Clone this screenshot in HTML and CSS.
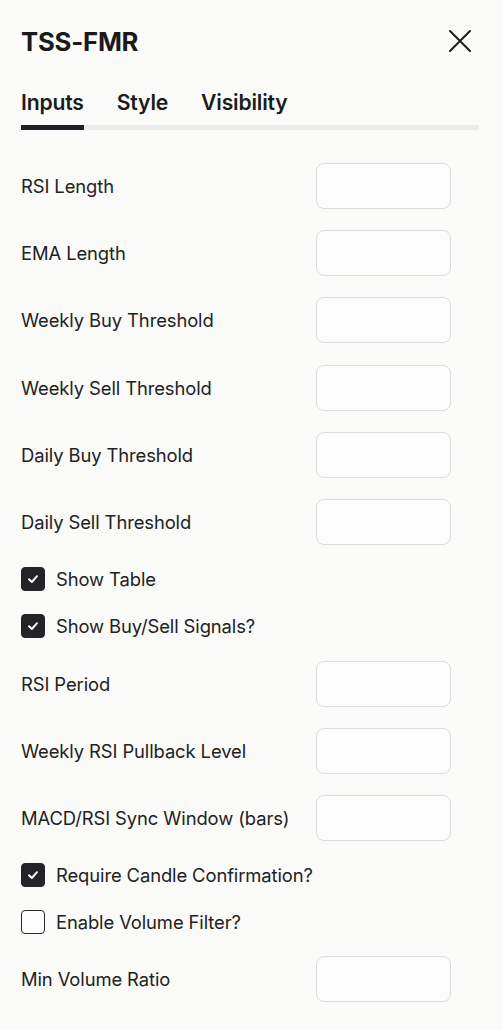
FILE: index.html
```html
<!DOCTYPE html>
<html>
<head>
<meta charset="utf-8">
<link rel="stylesheet" href="styles.css">
</head>
<body>
<div class="panel">
  <header class="header">
    <h1 class="title">TSS-FMR</h1>
    <button class="close" aria-label="Close">
      <svg width="22" height="22" viewBox="0 0 22 22"><path d="M1 1 L21 21 M21 1 L1 21" stroke="#1c1c1c" stroke-width="2" stroke-linecap="round"/></svg>
    </button>
  </header>
  <nav class="tabs">
    <span class="tab active">Inputs</span>
    <span class="tab">Style</span>
    <span class="tab">Visibility</span>
  </nav>
  <div class="form">
    <div class="row"><span class="label">RSI Length</span><input class="field" type="text"></div>
    <div class="row"><span class="label">EMA Length</span><input class="field" type="text"></div>
    <div class="row"><span class="label">Weekly Buy Threshold</span><input class="field" type="text"></div>
    <div class="row"><span class="label">Weekly Sell Threshold</span><input class="field" type="text"></div>
    <div class="row"><span class="label">Daily Buy Threshold</span><input class="field" type="text"></div>
    <div class="row"><span class="label">Daily Sell Threshold</span><input class="field" type="text"></div>
    <label class="check"><span class="box on"><svg width="14" height="14" viewBox="0 0 14 14"><path d="M3 7.3 L5.9 10 L11 4.2" fill="none" stroke="#fff" stroke-width="2" stroke-linecap="round" stroke-linejoin="round"/></svg></span><span class="label">Show Table</span></label>
    <label class="check"><span class="box on"><svg width="14" height="14" viewBox="0 0 14 14"><path d="M3 7.3 L5.9 10 L11 4.2" fill="none" stroke="#fff" stroke-width="2" stroke-linecap="round" stroke-linejoin="round"/></svg></span><span class="label">Show Buy/Sell Signals?</span></label>
    <div class="row"><span class="label">RSI Period</span><input class="field" type="text"></div>
    <div class="row"><span class="label">Weekly RSI Pullback Level</span><input class="field" type="text"></div>
    <div class="row"><span class="label">MACD/RSI Sync Window (bars)</span><input class="field" type="text"></div>
    <label class="check"><span class="box on"><svg width="14" height="14" viewBox="0 0 14 14"><path d="M3 7.3 L5.9 10 L11 4.2" fill="none" stroke="#fff" stroke-width="2" stroke-linecap="round" stroke-linejoin="round"/></svg></span><span class="label">Require Candle Confirmation?</span></label>
    <label class="check"><span class="box"></span><span class="label">Enable Volume Filter?</span></label>
    <div class="row"><span class="label">Min Volume Ratio</span><input class="field" type="text"></div>
  </div>
</div>
</body>
</html>
```
FILE: styles.css
```css
html, body {
  margin: 0;
  padding: 0;
  background: #fafaf9;
}
body {
  font-family: Inter, "Noto Sans", "Liberation Sans", sans-serif;
  color: #1f1f1f;
}
.panel {
  padding: 24px 24px 0 21px;
}
.header {
  display: flex;
  align-items: center;
  justify-content: space-between;
  height: 34px;
  padding-right: 8px;
}
.title {
  margin: 0;
  font-size: 25.7px;
  font-weight: 700;
  letter-spacing: -0.2px;
  color: #1a1a1a;
}
.close {
  background: none;
  border: 0;
  padding: 0;
  width: 22px;
  height: 22px;
  display: flex;
}
.tabs {
  display: flex;
  gap: 33px;
  margin-top: 31px;
  border-bottom: 5px solid #ebebee;
}
.tab {
  font-size: 21.2px;
  font-weight: 600;
  color: #1c1c1c;
  padding-bottom: 10px;
  margin-bottom: -5px;
  border-bottom: 5px solid transparent;
  letter-spacing: -0.2px;
}
.tab.active {
  border-bottom-color: #1e1f29;
}
.form {
  display: flex;
  flex-direction: column;
  gap: 21.2px;
  margin-top: 33px;
  padding-right: 28px;
}
.row {
  display: flex;
  align-items: center;
  justify-content: space-between;
  height: 46px;
}
.label {
  font-size: 18.4px;
  color: #222;
  letter-spacing: -0.1px;
}
.field {
  box-sizing: border-box;
  width: 135px;
  height: 46px;
  border: 1.5px solid #dcdcdf;
  border-radius: 8px;
  background: #fcfcfc;
  margin: 0;
}
.check {
  display: flex;
  align-items: center;
  gap: 11px;
  height: 26px;
}
.box {
  box-sizing: border-box;
  width: 24px;
  height: 24px;
  border-radius: 4px;
  border: 1.5px solid #2a2a2a;
  display: flex;
  align-items: center;
  justify-content: center;
  background: #fcfcfc;
}
.box.on {
  background: #242428;
  border-color: #242428;
}
```
